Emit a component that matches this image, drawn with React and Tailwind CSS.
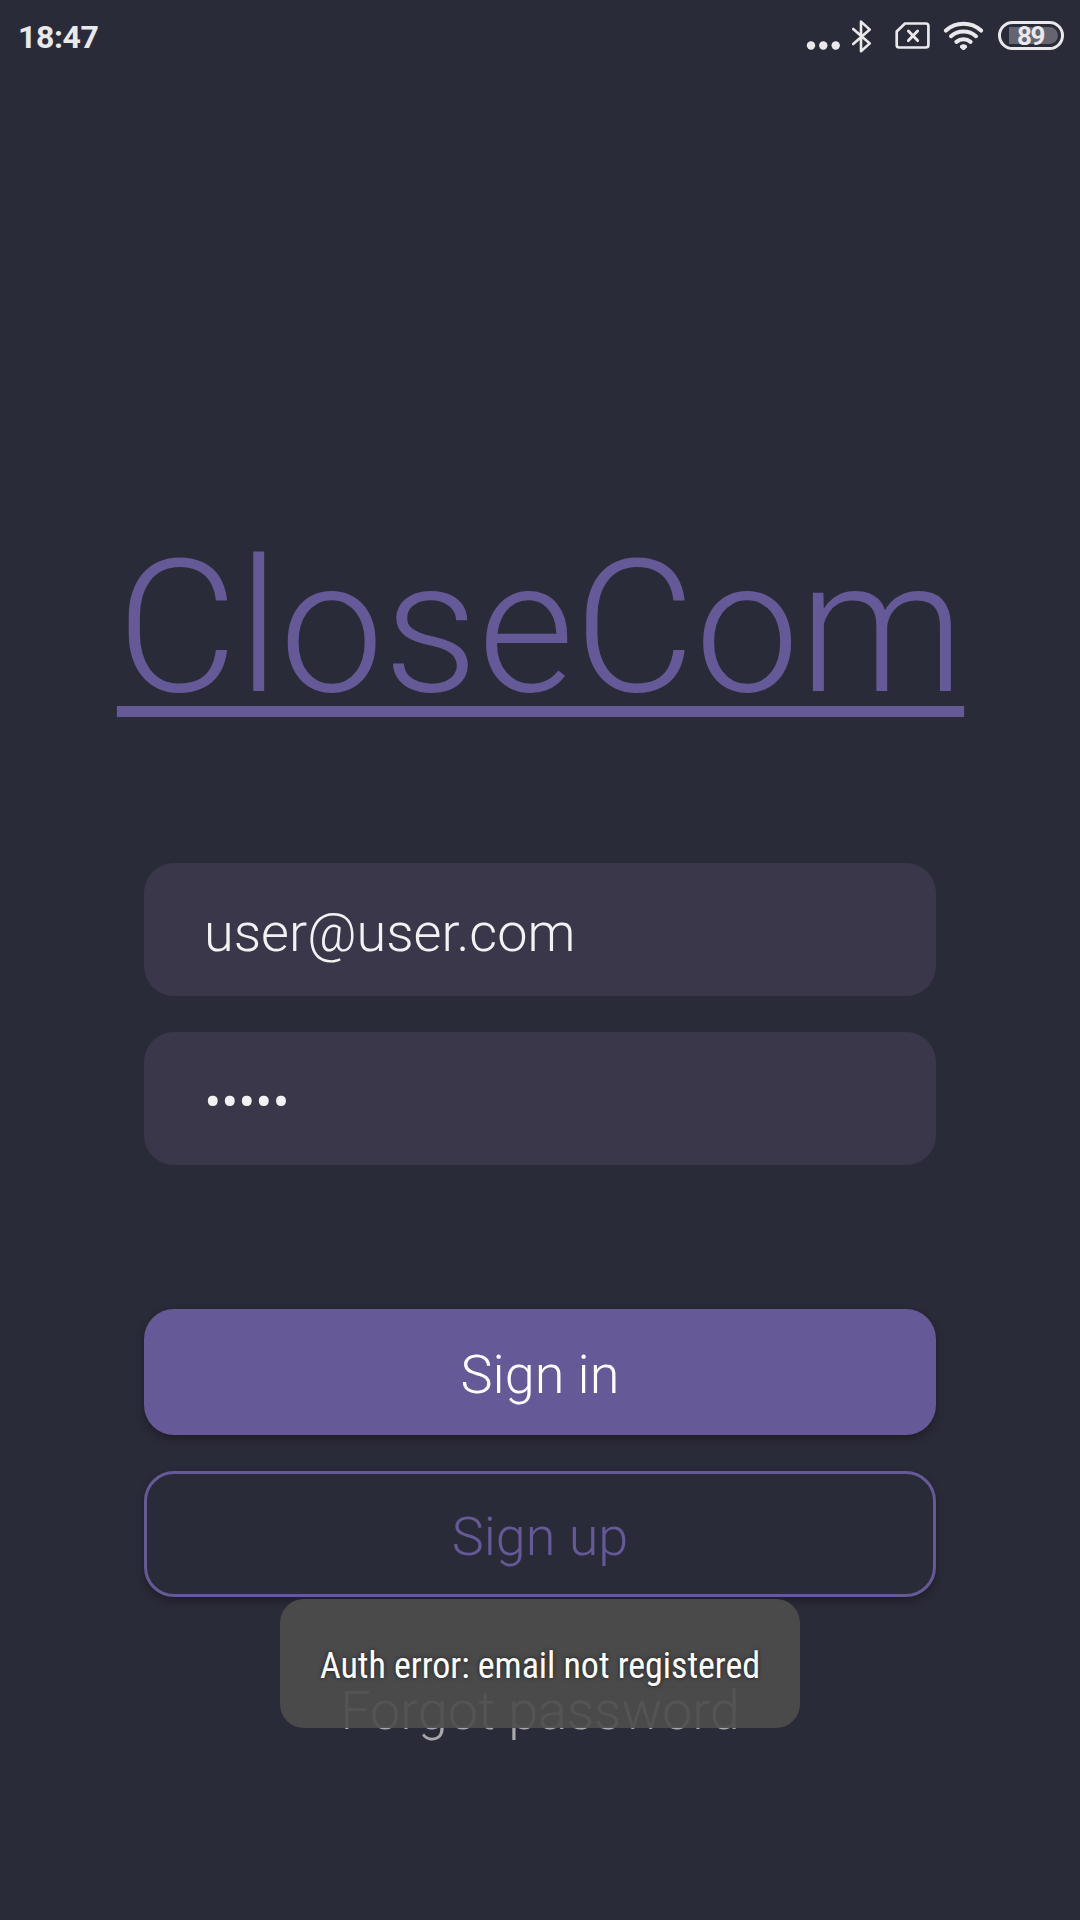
const field = "flex h-[133px] items-center rounded-[30px] bg-[#393749] px-[60px] pt-[7px] text-[54px] leading-none text-[#f2f2f2]";
const button = "flex h-[126px] items-center justify-center rounded-[30px] pt-[6px] text-[54px] leading-none shadow-[0_4px_8px_rgba(0,0,0,0.3)]";

function StatusIcons() {
  return (
    <div className="flex h-[50px] items-center text-[#e9e9eb]">
      <svg className="h-[50px] w-[34px]" viewBox="0 0 34 50" fill="currentColor">
        <circle cx="5" cy="34.5" r="4.2" />
        <circle cx="17.3" cy="34.5" r="4.2" />
        <circle cx="29.7" cy="34.5" r="4.2" />
      </svg>
      <svg className="ml-[11px] h-[50px] w-[22px]" viewBox="0 0 22 50" fill="none" stroke="currentColor" strokeWidth="2.6" strokeLinejoin="round" strokeLinecap="round">
        <path d="M2.2 18 L18.8 32.4 L10 40.2 V10.6 L18.8 18.6 L2.2 33" />
      </svg>
      <svg className="ml-[22px] h-[50px] w-[36px]" viewBox="0 0 36 50" fill="none" stroke="currentColor" strokeLinecap="round" strokeLinejoin="round">
        <path d="M10 12.5 H30.8 Q33.4 12.5 33.4 15 V34 Q33.4 36.5 30.8 36.5 H4.2 Q1.7 36.5 1.7 34 V20.5 Z" strokeWidth="2.7" />
        <path d="M13.4 20 L22.6 29.6 M22.6 20 L13.4 29.6" strokeWidth="2.9" />
      </svg>
      <svg className="ml-[12px] h-[50px] w-[42px]" viewBox="0 0 42 50" fill="none" stroke="currentColor" strokeWidth="4.1" strokeLinecap="round">
        <path d="M2.9 19.6 A26 26 0 0 1 38.1 19.6" />
        <path d="M8 25.2 A19 19 0 0 1 33 25.2" />
        <path d="M13.4 30.8 A11.2 11.2 0 0 1 27.6 30.8" />
        <path d="M19.1 38.5 L17.1 36.4 Q16.4 35.2 17.5 34.3 Q20.5 32 23.5 34.3 Q24.6 35.2 23.9 36.4 L21.9 38.5 Q20.5 39.6 19.1 38.5 Z" fill="currentColor" stroke="none" />
      </svg>
      <div className="ml-[13px] -mt-px flex h-[29px] w-[66px] rounded-full border-[3px] border-current p-[3px] pl-[8px]">
        <div className="flex h-[17px] flex-1 items-center rounded-l-[2px] rounded-r-full bg-[#656471] pl-[8px] text-[26px] leading-none font-bold tracking-[-1.3px]">
          89
        </div>
      </div>
    </div>
  );
}

export default function App() {
  return (
    <main className="relative flex h-[1920px] w-[1080px] flex-col overflow-hidden bg-[#2a2b38] font-['Roboto',sans-serif] font-light">
      <header className="flex h-[72px] items-center justify-between pr-[16px] pl-[18px]">
        <span className="pt-[2px] text-[32px] leading-none font-bold tracking-[-0.4px] text-[#e9e9eb]">18:47</span>
        <StatusIcons />
      </header>

      <h1 className="mt-[445px] pl-px text-center text-[186px] leading-[220px] font-light text-[#655997]">
        <span className="underline decoration-[11px] underline-offset-[15px] [text-decoration-skip-ink:none]">CloseCom</span>
      </h1>

      <form className="mx-[144px] mt-[126px] flex flex-col">
        <div className={field}>user@user.com</div>
        <div className={`${field} mt-[36px] tracking-[-0.45px]`}>•••••</div>
        <button type="button" className={`${button} mt-[144px] bg-[#655997] text-white`}>Sign in</button>
        <button type="button" className={`${button} mt-[36px] border-[3px] border-[#655997] bg-[#2a2b38] text-[#655997]`}>Sign up</button>
        <a className="mt-[82px] text-center text-[54px] leading-[64px] tracking-[-0.1px] text-[#a9a9ab]">Forgot password</a>
      </form>

      <div className="absolute top-[1599px] left-[280px] flex h-[129px] w-[520px] items-center justify-center rounded-[24px] bg-[#4d4d4d]/92 pt-[4px] text-[36px] leading-none font-normal tracking-[-0.05px] text-white [font-stretch:75%] [text-shadow:0_0_4px_rgba(0,0,0,0.6)]">
        Auth error: email not registered
      </div>
    </main>
  );
}
